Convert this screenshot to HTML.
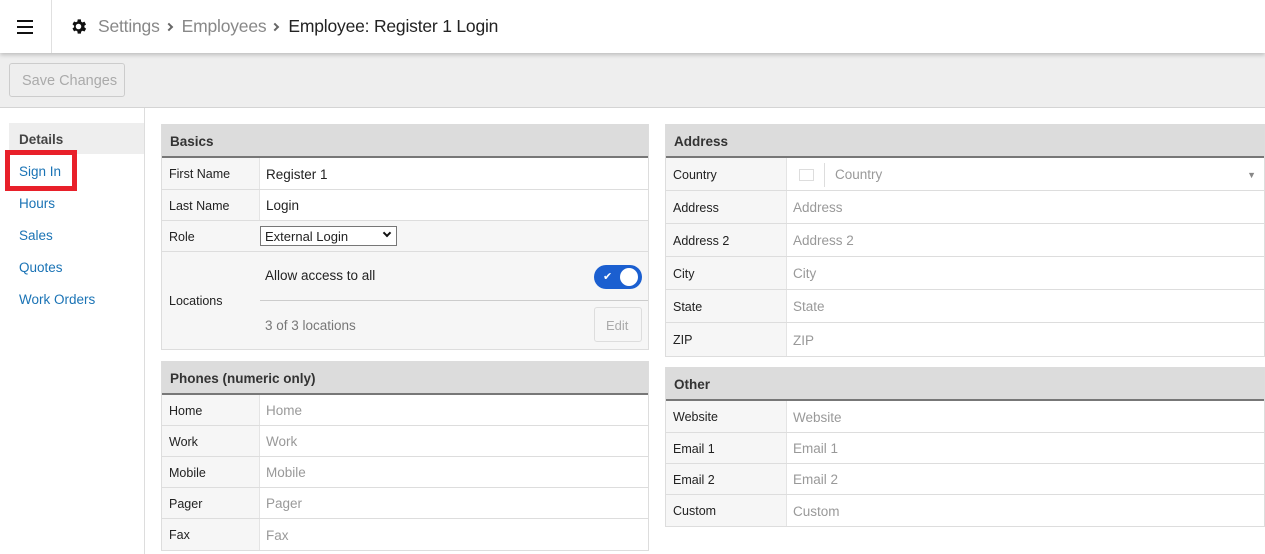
<!DOCTYPE html>
<html><head><style>
*{box-sizing:border-box;margin:0;padding:0}
body{width:1265px;height:554px;overflow:hidden;background:#fff;font-family:"Liberation Sans",sans-serif;font-size:13px;color:#222;position:relative}
.a{position:absolute}
.hdr{left:0;top:0;width:1265px;height:53px;background:#fff;box-shadow:0 2px 4px rgba(0,0,0,.2);z-index:2}
.tb{left:0;top:53px;width:1265px;height:55px;background:#eee;border-bottom:1px solid #d4d4d4}
.side{left:0;top:108px;width:145px;height:446px;border-right:1px solid #ddd}
.link{left:19px;color:#1a73b5;font-size:13.5px}
.panel{border:1px solid #ddd;border-top:none}
.ph{background:#dcdcdc;height:34px;border-bottom:2px solid #777;font-weight:bold;font-size:13.5px;padding:10px 8px 0;color:#333}
.row{display:flex;border-bottom:1px solid #ddd}
.row:last-child{border-bottom:none}
.lb{background:#f6f6f6;border-right:1px solid #e4e4e4;padding-left:7px;padding-top:1px;display:flex;align-items:center;font-size:12.5px}
.v{flex:1;display:flex;align-items:center;padding-left:6px;padding-top:1px;font-size:13.5px}
.ph2{color:#999}
.sep{display:inline-block;width:6px;height:6px;border-right:2px solid #666;border-top:2px solid #666;transform:rotate(45deg);margin:0 10px 2px 6px}
</style></head><body>
<div class="a hdr">
  <div class="a" style="left:17px;top:20px;width:16px;height:2px;background:#111;box-shadow:0 6px 0 #111,0 12px 0 #111"></div>
  <div class="a" style="left:51px;top:0;width:1px;height:53px;background:#e0e0e0"></div>
  <svg class="a" style="left:69px;top:17px" width="19" height="19" viewBox="0 0 24 24"><path fill="#111" d="M19.4 13a7.5 7.5 0 0 0 0-2l2.1-1.6-2-3.5-2.5 1a7.4 7.4 0 0 0-1.7-1L15 3h-4l-.4 2.7a7.4 7.4 0 0 0-1.7 1l-2.5-1-2 3.5L6.5 11a7.5 7.5 0 0 0 0 2l-2.1 1.6 2 3.5 2.5-1a7.4 7.4 0 0 0 1.7 1L11 21h4l.4-2.7a7.4 7.4 0 0 0 1.7-1l2.5 1 2-3.5zM12 15.5a3.5 3.5 0 1 1 0-7 3.5 3.5 0 0 1 0 7z"/></svg>
  <div class="a" style="left:98px;top:16px;font-size:17.5px;letter-spacing:-0.2px;color:#888;white-space:nowrap">Settings<span class="sep"></span>Employees<span class="sep"></span><span style="color:#222">Employee: Register 1 Login</span></div>
</div>
<div class="a tb"><div class="a" style="left:9px;top:10px;width:116px;height:34px;border:1px solid #ccc;border-radius:3px;color:#aaa;font-size:14.5px;padding:9px 0 0 12px">Save Changes</div></div>
<div class="a side"></div>
<div class="a" style="left:9px;top:123px;width:135px;height:31px;background:#eee;font-weight:bold;color:#444;font-size:13.5px;padding:9px 10px">Details</div>
<div class="a" style="left:5px;top:150px;width:72px;height:41px;border:5px solid #e8202a;background:#fff"></div>
<div class="a link" style="top:164px">Sign In</div>
<div class="a link" style="top:196px">Hours</div>
<div class="a link" style="top:228px">Sales</div>
<div class="a link" style="top:260px">Quotes</div>
<div class="a link" style="top:292px">Work Orders</div>

<div class="a panel" style="left:161px;top:124px;width:488px">
  <div class="ph">Basics</div>
  <div class="row" style="height:32px"><div class="lb" style="width:98px">First Name</div><div class="v">Register 1</div></div>
  <div class="row" style="height:31px"><div class="lb" style="width:98px">Last Name</div><div class="v">Login</div></div>
  <div class="row" style="height:31px;background:#f6f6f6"><div class="lb" style="width:98px;border:none">Role</div><div style="margin-top:5px;width:137px;height:20px;border:1px solid #777;background:#fff;font-size:13px;padding:2px 4px;position:relative">External Login<span style="position:absolute;right:6px;top:3px;width:6px;height:6px;border-right:2px solid #111;border-bottom:2px solid #111;transform:rotate(45deg)"></span></div></div>
  <div class="row" style="height:97px;background:#f6f6f6;position:relative"><div class="lb" style="width:98px;border:none">Locations</div>
    <div class="a" style="left:103px;top:16px;font-size:13.5px">Allow access to all</div>
    <div class="a" style="left:432px;top:13px;width:48px;height:24px;border-radius:12px;background:#1b5fd0"><span class="a" style="left:9px;top:5px;color:#fff;font-size:11px">✔</span><span class="a" style="left:26px;top:3px;width:18px;height:18px;border-radius:50%;background:#fff"></span></div>
    <div class="a" style="left:98px;top:48px;width:388px;height:1px;background:#ccc"></div>
    <div class="a" style="left:103px;top:66px;color:#777;font-size:13.5px">3 of 3 locations</div>
    <div class="a" style="left:432px;top:55px;width:48px;height:35px;border:1px solid #ddd;border-radius:3px;color:#aaa;padding:10px 0 0 11px">Edit</div>
  </div>
</div>
<div class="a panel" style="left:161px;top:361px;width:488px">
  <div class="ph">Phones (numeric only)</div>
  <div class="row" style="height:31px"><div class="lb" style="width:98px">Home</div><div class="v ph2">Home</div></div>
  <div class="row" style="height:31px"><div class="lb" style="width:98px">Work</div><div class="v ph2">Work</div></div>
  <div class="row" style="height:31px"><div class="lb" style="width:98px">Mobile</div><div class="v ph2">Mobile</div></div>
  <div class="row" style="height:31px"><div class="lb" style="width:98px">Pager</div><div class="v ph2">Pager</div></div>
  <div class="row" style="height:31px"><div class="lb" style="width:98px">Fax</div><div class="v ph2">Fax</div></div>
</div>

<div class="a panel" style="left:665px;top:124px;width:600px">
  <div class="ph">Address</div>
  <div class="row" style="height:33px;position:relative"><div class="lb" style="width:121px">Country</div><div class="v"><span style="display:inline-block;width:15px;height:12px;border:1px solid #ddd;margin-left:6px"></span><span style="display:inline-block;width:1px;height:24px;background:#ddd;margin:0 10px"></span><span class="ph2">Country</span></div><span class="a" style="right:8px;top:12px;color:#888;font-size:9px">▼</span></div>
  <div class="row" style="height:33px"><div class="lb" style="width:121px">Address</div><div class="v ph2">Address</div></div>
  <div class="row" style="height:33px"><div class="lb" style="width:121px">Address 2</div><div class="v ph2">Address 2</div></div>
  <div class="row" style="height:33px"><div class="lb" style="width:121px">City</div><div class="v ph2">City</div></div>
  <div class="row" style="height:33px"><div class="lb" style="width:121px">State</div><div class="v ph2">State</div></div>
  <div class="row" style="height:33px"><div class="lb" style="width:121px">ZIP</div><div class="v ph2">ZIP</div></div>
</div>
<div class="a panel" style="left:665px;top:367px;width:600px">
  <div class="ph">Other</div>
  <div class="row" style="height:32px"><div class="lb" style="width:121px">Website</div><div class="v ph2">Website</div></div>
  <div class="row" style="height:31px"><div class="lb" style="width:121px">Email 1</div><div class="v ph2">Email 1</div></div>
  <div class="row" style="height:31px"><div class="lb" style="width:121px">Email 2</div><div class="v ph2">Email 2</div></div>
  <div class="row" style="height:31px"><div class="lb" style="width:121px">Custom</div><div class="v ph2">Custom</div></div>
</div>
</body></html>
